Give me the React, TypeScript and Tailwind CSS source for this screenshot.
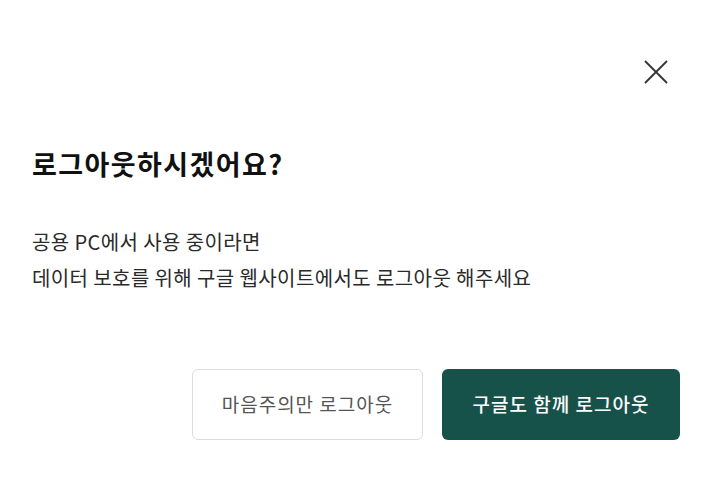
import React from "react";

export default function App() {
  return (
    <div className="w-[712px] h-[482px] bg-white font-['Noto_Sans_CJK_KR',sans-serif] text-[#1a1a1a]">
      <div className="flex flex-col px-8">
        {/* Close */}
        <div className="flex justify-end pt-[60px] pr-[12px]">
          <button className="h-6 w-6 flex items-center justify-center">
            <svg width="24" height="24" viewBox="0 0 24 24" fill="none" stroke="#333" strokeWidth="1.8" strokeLinecap="round">
              <path d="M1.5 1.5L22.5 22.5M22.5 1.5L1.5 22.5" />
            </svg>
          </button>
        </div>

        <h1 className="mt-[62px] text-[27px] font-bold leading-[36px] tracking-[1.4px] text-[#111]">
          로그아웃하시겠어요?
        </h1>

        <div className="mt-[42px] text-[20px] leading-[36px] tracking-[0.4px] text-[#2a2a2a]">
          <p>공용 PC에서 사용 중이라면</p>
          <p>데이터 보호를 위해 구글 웹사이트에서도 로그아웃 해주세요</p>
        </div>

        <div className="mt-[73px] flex justify-end gap-[19px]">
          <button className="h-[71px] w-[231px] rounded-md border border-[#dcdcdc] bg-white text-[19px] tracking-[1px] text-[#555]">
            마음주의만 로그아웃
          </button>
          <button className="h-[71px] w-[238px] rounded-md bg-[#17524a] text-[19px] tracking-[1px] font-medium text-white">
            구글도 함께 로그아웃
          </button>
        </div>
      </div>
    </div>
  );
}
